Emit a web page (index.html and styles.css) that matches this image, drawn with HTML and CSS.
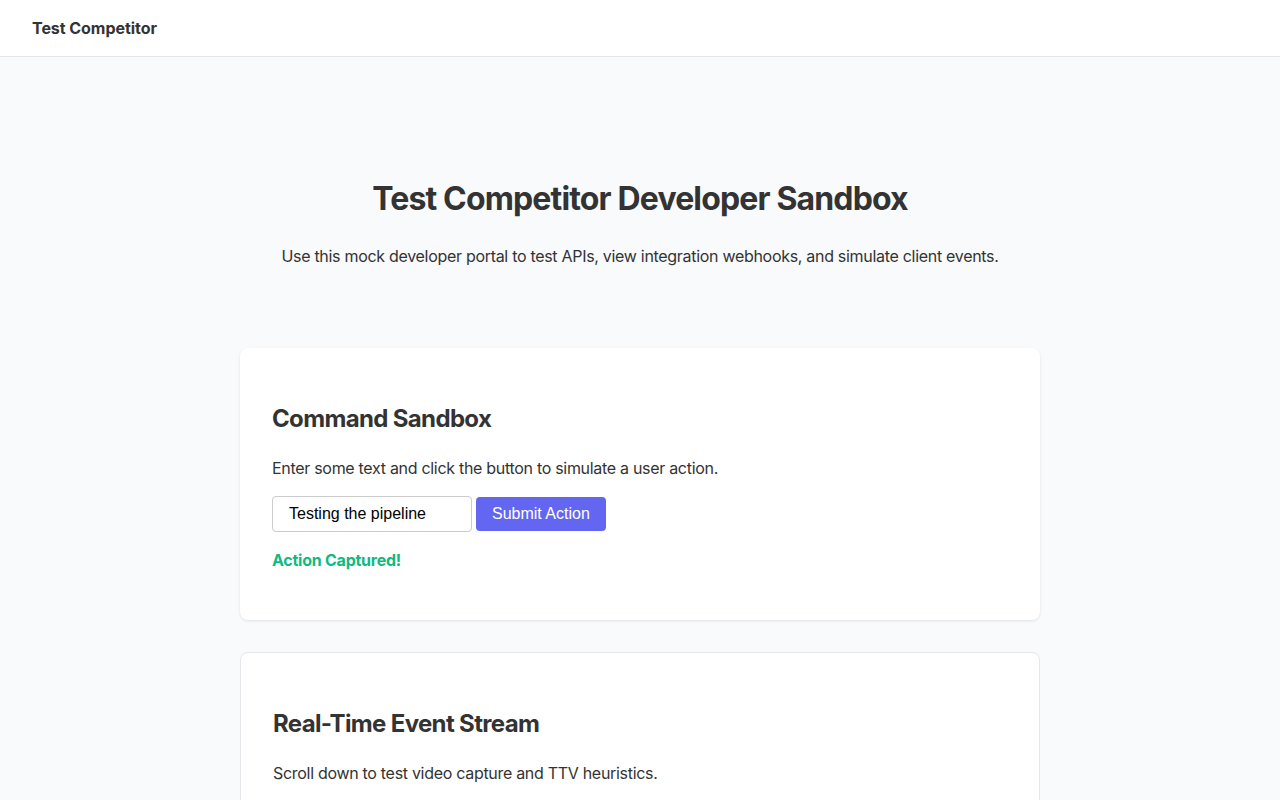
FILE: index.html
```html
<!DOCTYPE html>
<html lang="en">
<head>
<meta charset="utf-8">
<title>Test Competitor Developer Sandbox</title>
<link rel="stylesheet" href="styles.css">
</head>
<body>
<header class="topbar">
  <div class="brand">Test Competitor</div>
</header>
<main class="main">
  <section class="hero">
    <h1 class="hero-title">Test Competitor Developer Sandbox</h1>
    <p class="hero-text">Use this mock developer portal to test APIs, view integration webhooks, and simulate client events.</p>
  </section>
  <section class="card card-shadow">
    <h2 class="card-title">Command Sandbox</h2>
    <p class="card-text">Enter some text and click the button to simulate a user action.</p>
    <div class="form-row">
      <input class="text-input" type="text" value="Testing the pipeline">
      <button class="btn" type="button">Submit Action</button>
    </div>
    <p class="status">Action Captured!</p>
  </section>
  <section class="card card-border">
    <h2 class="card-title">Real-Time Event Stream</h2>
    <p class="card-text">Scroll down to test video capture and TTV heuristics.</p>
    <div class="stream-space"></div>
  </section>
</main>
</body>
</html>
```

FILE: styles.css
```css
* { box-sizing: border-box; }
html, body { margin: 0; padding: 0; }
body {
  background: #f9fafb;
  color: #333333;
  font-family: Inter, "Noto Sans", "Liberation Sans", sans-serif;
  font-size: 16px;
  line-height: 1.5;
  letter-spacing: -0.3px;
}
.topbar {
  height: 57px;
  background: #ffffff;
  border-bottom: 1px solid #e5e7eb;
  display: flex;
  align-items: center;
  padding: 0 32px;
}
.brand {
  font-weight: 700;
  font-size: 16px;
  line-height: 24px;
  padding-bottom: 1px;
  letter-spacing: -0.05px;
}
.main {
  width: 800px;
  margin: 0 auto;
  padding-bottom: 64px;
}
.hero {
  padding-top: 123px;
  padding-bottom: 80px;
  text-align: center;
}
.hero-title {
  margin: 0 0 26px;
  font-size: 32px;
  line-height: 38px;
  font-weight: 700;
  letter-spacing: -0.85px;
}
.hero-text {
  margin: 0;
  font-size: 16px;
  line-height: 24px;
}
.card {
  background: #ffffff;
  border-radius: 8px;
  padding: 32px;
  margin-bottom: 32px;
}
.card-shadow {
  box-shadow: 0 1px 3px rgba(0, 0, 0, 0.1);
}
.card-border {
  border: 1px solid #e5e7eb;
}
.card-title {
  margin: 25px 0 23px;
  font-size: 24px;
  line-height: 28px;
  font-weight: 700;
  letter-spacing: -0.65px;
}
.card-text {
  margin: 0 0 16px;
  line-height: 24px;
}
.form-row {
  display: flex;
  gap: 4px;
  align-items: center;
}
.text-input {
  width: 200px;
  height: 36px;
  padding: 8px 16px;
  border: 1px solid #cccccc;
  border-radius: 4px;
  font-family: "Liberation Sans", Arial, sans-serif;
  font-size: 16px;
  letter-spacing: normal;
  color: #000000;
  background: #ffffff;
}
.btn {
  height: 34px;
  padding: 0 16px;
  border: none;
  border-radius: 4px;
  background: #6366f1;
  color: #ffffff;
  font-family: "Liberation Sans", Arial, sans-serif;
  font-size: 16px;
  letter-spacing: normal;
  cursor: pointer;
}
.status {
  margin: 16px 0 16px;
  color: #10b981;
  font-weight: 700;
  line-height: 24px;
  letter-spacing: -0.25px;
}
.stream-space {
  height: 400px;
}
```
